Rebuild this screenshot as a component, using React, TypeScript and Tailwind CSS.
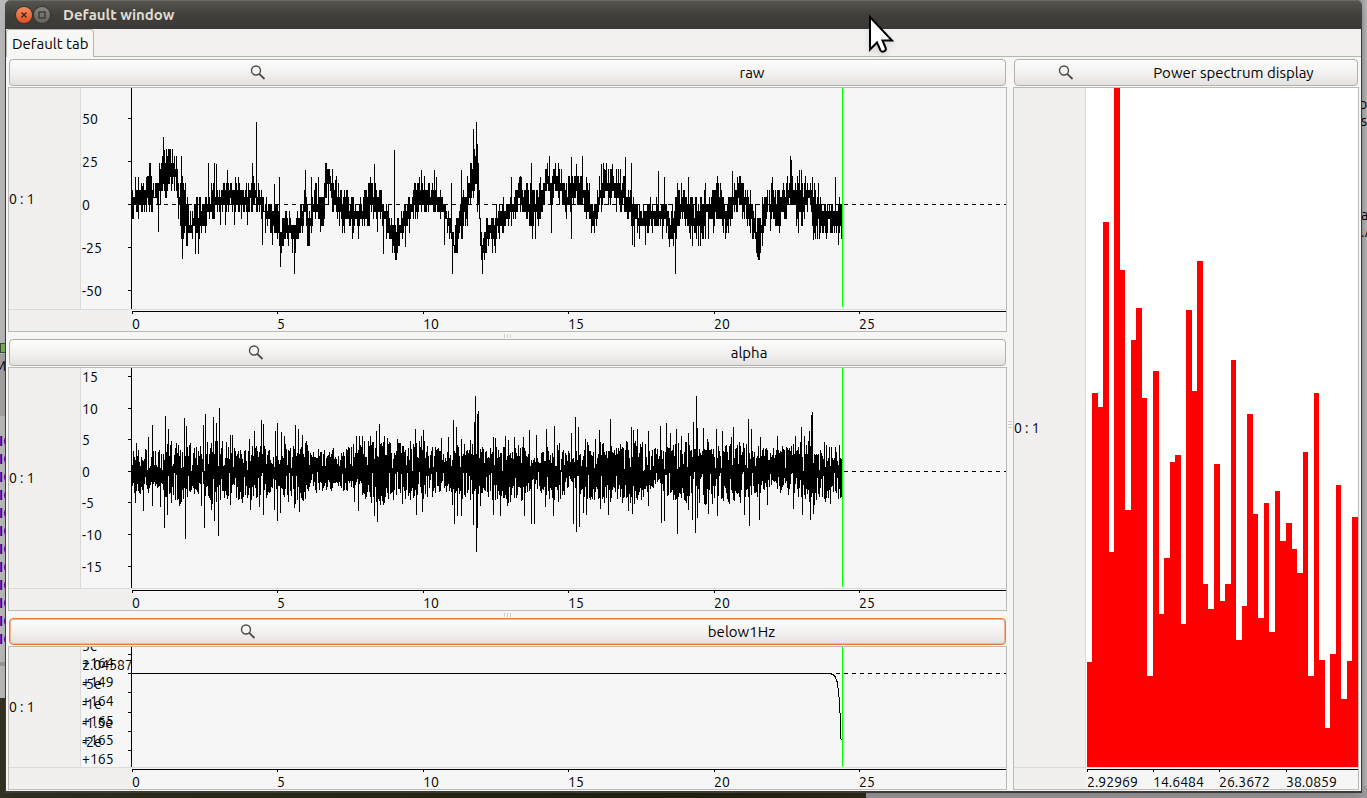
import type { ReactNode } from "react";
import clsx from "clsx";

type Band = [end: number, high: number, low: number];
type Spike = [x: number, value: number];
type Tick = { at: number; lines: string[] };

const CURSOR_X = 710;
const TIME_TICKS = ["0", "5", "10", "15", "20", "25"];

// Signal extents in pixels above (+) and below (-) the zero line.
const rawBands: Band[] = [
  [8, 14, -6], [14, 18, -10], [18, 25, -2], [28, 19, -3], [31, 40, 10], [38, 50, 16], [46, 46, 20],
  [49, 14, -14], [52, 28, -52], [64, -14, -30], [68, 4, -32], [75, 0, -22], [86, 14, -7], [108, 16, -3],
  [118, 14, -9], [126, 24, 4], [140, 0, -19], [148, -3, -26], [151, -20, -52], [158, -14, -30],
  [168, -20, -52], [171, 0, -35], [174, 20, -3], [177, -8, -40], [188, 17, -12], [193, 0, -27],
  [196, 40, 14], [218, 14, -19], [233, 0, -26], [250, 17, -6], [262, -4, -27], [266, -19, -50],
  [276, -9, -30], [288, 14, -9], [292, 19, 0], [308, 14, -1], [319, 0, -14], [325, -29, -56],
  [338, 8, -19], [341, 40, 0], [345, 68, 18], [347, 40, -10], [352, -36, -66], [358, -19, -42],
  [368, -9, -36], [378, 0, -19], [398, 18, -1], [404, 14, -19], [413, 14, -9], [418, 45, 11],
  [421, 25, -20], [425, 40, 18], [441, 18, -6], [451, 26, 8], [458, 24, -9], [466, -3, -27],
  [476, 34, 8], [484, 34, 0], [499, 21, 0], [513, -6, -29], [528, 0, -24], [536, -2, -14],
  [540, -19, -34], [544, 13, -39], [557, 14, -12], [568, 0, -36], [576, 14, -29], [584, 14, -19],
  [590, 19, -14], [599, -2, -27], [611, 24, 1], [623, 14, -19], [628, -14, -52], [643, 11, -9],
  [653, 11, -19], [661, 21, 0], [673, 21, -19], [680, 21, 4], [684, 20, -27], [698, 1, -26], [711, -2, -26],
];

const rawSpikes: Spike[] = [
  [0, -14], [3, 27], [6, 27], [10, 18], [14, 27], [17, 41], [18, 41], [26, -27], [31, 67], [32, 54],
  [36, 54], [37, 46], [42, 48], [44, 48], [49, 48], [50, 27], [50, -54], [63, -49], [66, -49], [76, 41],
  [82, 41], [84, 40], [88, -20], [93, -20], [95, 34], [102, -20], [103, 27], [106, 27], [115, -20],
  [120, 41], [124, 82], [130, -40], [140, -40], [142, 20], [147, 27], [148, -62], [162, -69], [173, 34],
  [175, -40], [179, 27], [186, 27], [188, -27], [193, 41], [194, 41], [203, 24], [220, -34], [238, 27],
  [242, 40], [245, -27], [251, -49], [262, 54], [263, -55], [273, -42], [287, 27], [289, 34], [302, 34],
  [304, 27], [312, -40], [319, 21], [320, -69], [329, 34], [341, 75], [344, 82], [345, 60], [350, -69],
  [363, -48], [379, 27], [387, 27], [389, 27], [399, 41], [400, -34], [403, -34], [408, 27], [417, 48],
  [419, -28], [423, 41], [429, 34], [439, 47], [439, -34], [444, 40], [450, 48], [454, 27], [469, 40],
  [473, 34], [480, 40], [493, 47], [499, 41], [500, -40], [502, -42], [513, -40], [526, 33], [532, 27],
  [530, -34], [537, -42], [543, -69], [556, 27], [560, -41], [568, -41], [573, 21], [576, -34],
  [600, 33], [605, 27], [625, -52], [626, -55], [638, -26], [640, 27], [658, 48], [659, 44], [667, 34],
  [669, 34], [680, 27], [681, -35], [703, 27], [706, -40],
];

const alphaBands: Band[] = [
  [8, 15, -14], [20, 16, -18], [32, 16, -16], [60, 26, -28], [72, 18, -18], [92, 28, -28], [108, 22, -22],
  [124, 18, -22], [136, 26, -26], [145, 8, -9], [172, 26, -28], [202, 16, -14], [222, 15, -12],
  [240, 24, -20], [264, 24, -28], [294, 22, -24], [302, 24, -20], [318, 12, -12], [346, 26, -24],
  [356, 20, -20], [378, 20, -24], [398, 22, -24], [406, 8, -8], [438, 24, -28], [446, 12, -8],
  [468, 24, -26], [504, 22, -24], [520, 26, -26], [530, 16, -12], [562, 22, -24], [595, 24, -26],
  [630, 22, -24], [651, 16, -12], [676, 22, -20], [691, 24, -28], [711, 18, -20],
];

const alphaSpikes: Spike[] = [
  [4, 28], [3, -31], [11, -39], [16, 34], [20, 46], [20, -34], [28, -35], [33, 55], [32, -56], [36, 42],
  [35, -43], [39, 30], [48, -32], [52, 53], [53, -67], [54, 45], [69, -34], [71, 46], [72, -56], [73, 57],
  [79, -38], [81, 54], [82, -49], [84, 48], [86, -64], [87, 63], [90, 30], [98, 36], [98, -33], [100, 36],
  [110, -31], [117, 32], [118, -38], [122, 40], [127, -35], [129, 51], [131, 47], [131, -43], [142, -38],
  [143, 40], [145, 48], [145, -49], [148, -41], [149, 39], [152, 35], [162, -36], [163, 46], [166, 42],
  [167, -40], [170, 36], [174, 30], [201, 23], [221, 27], [222, -30], [224, 35], [226, -39], [227, 35],
  [230, 35], [238, 35], [239, -31], [242, -44], [244, 40], [245, -50], [247, 47], [252, 35], [255, 33],
  [261, -28], [265, 32], [278, 30], [283, 42], [284, -43], [289, 35], [290, -40], [291, 41], [309, 33],
  [316, 34], [320, -33], [321, 51], [322, -52], [324, 44], [325, -44], [329, 32], [329, -44], [340, 27],
  [341, -53], [342, 49], [343, 75], [344, -80], [345, 57], [345, -56], [346, 60], [348, -34], [361, 34],
  [361, -43], [363, 33], [368, -44], [373, 35], [375, -34], [376, 31], [382, 34], [391, 34], [392, -44],
  [397, 41], [399, -52], [402, -52], [404, 36], [413, -35], [414, 42], [421, -44], [422, 45], [439, 38],
  [441, -52], [443, 54], [444, -60], [446, 44], [447, -55], [451, -41], [453, 32], [454, -43], [463, 32],
  [467, 41], [468, -37], [476, -43], [478, 52], [494, 30], [496, -39], [499, 44], [500, -42], [501, 41],
  [505, 42], [516, 40], [516, -34], [528, 45], [529, -51], [532, -49], [534, 48], [538, 38], [544, 42],
  [545, -62], [549, 35], [556, 38], [556, -38], [560, -48], [561, 49], [563, -61], [564, 75], [565, 43],
  [565, -46], [571, 43], [575, 32], [576, -42], [584, 42], [585, -44], [590, 40], [599, 34], [601, 44],
  [612, -43], [616, 52], [617, -54], [619, 42], [627, -48], [628, 34], [635, -33], [645, 35], [661, -37],
  [663, 35], [669, 44], [670, -43], [672, 35], [677, 40], [678, -48], [679, 56], [680, 59], [681, -42],
  [692, 29], [698, -32], [703, 24], [707, 26], [706, -27],
];

const SPECTRUM_HEIGHT = 679;
const spectrum = [
  105, 374, 360, 545, 215, 679, 497, 257, 427, 459, 369, 91, 396, 153, 209, 305, 312, 143, 457, 376, 506,
  183, 158, 303, 166, 183, 407, 127, 161, 353, 253, 149, 264, 135, 276, 226, 244, 218, 194, 315, 91, 374,
  107, 39, 113, 282, 68, 106, 250,
];

function bandAt(bands: Band[], x: number) {
  const centre = (i: number) => ((i > 0 ? bands[i - 1][0] : 0) + bands[i][0]) / 2;
  let i = 0;
  while (i < bands.length - 1 && centre(i + 1) <= x) i++;
  const next = Math.min(i + 1, bands.length - 1);
  const span = centre(next) - centre(i);
  const t = span > 0 ? Math.max(0, (x - centre(i)) / span) : 0;
  return {
    high: bands[i][1] + (bands[next][1] - bands[i][1]) * t,
    low: bands[i][2] + (bands[next][2] - bands[i][2]) * t,
  };
}

type TraceOptions = { zero: number; overshoot: number; spread: number; step: number; gaps: number };

function buildTrace(bands: Band[], spikes: Spike[], { zero, overshoot, spread, step, gaps }: TraceOptions) {
  let seed = 7919;
  const random = () => {
    seed = (seed * 1664525 + 1013904223) % 4294967296;
    return seed / 4294967296;
  };
  const snap = (value: number) => Math.round(Math.round(value / step) * step);
  let d = "";
  for (let x = 0; x < CURSOR_X; x++) {
    const band = bandAt(bands, x);
    const high = band.high + overshoot;
    const low = band.low - overshoot;
    const range = high - low;
    let top = snap(high - random() * spread * range);
    let bottom = snap(low + random() * spread * range);
    // Some columns hold only half a swing.
    const swing = random();
    if (swing < gaps) top = Math.min(top, Math.round(random() * 8));
    else if (swing < gaps * 2) bottom = Math.max(bottom, -Math.round(random() * 8));
    for (const [sx, value] of spikes) {
      if (sx !== x) continue;
      if (value > top) top = value;
      if (value < bottom) bottom = value;
    }
    d += `M${x + 0.5} ${zero - top}V${zero - bottom + 1}`;
  }
  return d;
}

const rawTrace = buildTrace(rawBands, rawSpikes, { zero: 116, overshoot: 8, spread: 0.46, step: 6.9, gaps: 0 });
const alphaTrace = buildTrace(alphaBands, alphaSpikes, { zero: 103, overshoot: 7, spread: 0.3, step: 1, gaps: 0.15 });
const slowTrace = "M0 26.5H698L701 27.5L703 29.5L705 34.5L706 41L707 50L708 66L709 92H710";

const single = (at: number, label: string): Tick => ({ at, lines: [label] });

const channels = [
  {
    name: "raw",
    zero: 116,
    trace: rawTrace,
    size: "grow-[243]",
    ticks: [single(30, "50"), single(73, "25"), single(116, "0"), single(159, "-25"), single(202, "-50")],
  },
  {
    name: "alpha",
    zero: 103,
    trace: alphaTrace,
    size: "grow-[242]",
    ticks: [
      single(8, "15"), single(40, "10"), single(71, "5"), single(103, "0"),
      single(134, "-5"), single(166, "-10"), single(198, "-15"),
    ],
  },
  {
    name: "below1Hz",
    zero: 26,
    trace: slowTrace,
    size: "grow-[142]",
    focused: true,
    ticks: [
      { at: 7, lines: ["5e", "+164"] },
      { at: 26, lines: ["2.04587", "+149"] },
      { at: 45, lines: ["-5e", "+164"] },
      { at: 65, lines: ["-1e", "+165"] },
      { at: 84, lines: ["-1.5e", "+165"] },
      { at: 103, lines: ["-2e", "+165"] },
    ],
  },
];

function SearchIcon() {
  return (
    <svg className="size-4 shrink-0" viewBox="0 0 16 16" fill="none" aria-hidden="true">
      <circle cx="6" cy="5.500" r="4.500" stroke="#4a4a48" strokeWidth="1.4" />
      <path d="M9.200 8.800L14.500 14" stroke="#4a4a48" strokeWidth="1.8" />
    </svg>
  );
}

function PanelButton({ children, focused }: { children: ReactNode; focused?: boolean }) {
  return (
    <button
      type="button"
      className={clsx(
        "mx-px mb-px flex h-[27px] shrink-0 items-center justify-around rounded border bg-linear-to-b from-[#fdfdfd] via-[#f3f2f1] to-[#e4e2e0] px-1 text-[15px]",
        focused ? "border-[#f07a35] ring-1 ring-inset ring-[#f6b58e]" : "border-[#b3afa9]",
      )}
    >
      <SearchIcon />
      <span>{children}</span>
    </button>
  );
}

function YAxis({ ticks }: { ticks: Tick[] }) {
  return (
    <svg className="size-full overflow-hidden" shapeRendering="crispEdges">
      {ticks.map((tick) => (
        <g key={tick.at}>
          <path d={`M47 ${tick.at + 0.5}h3`} stroke="#000" />
          {tick.lines.map((line, i) => (
            <text key={line} x="1" y={tick.at + 6 + (tick.lines.length > 1 ? i * 17 - 9 : 0)}>
              {line}
            </text>
          ))}
        </g>
      ))}
    </svg>
  );
}

function XAxis({ labels, start, step }: { labels: string[]; start: number; step: number }) {
  return (
    <svg className="size-full overflow-hidden">
      <path d={`M${start} 1.5H2000`} stroke="#000" shapeRendering="crispEdges" />
      {labels.map((label, i) => {
        const x = start + Math.floor(i * step);
        return (
          <g key={label}>
            <path d={`M${x + 0.5} 1v3`} stroke="#000" shapeRendering="crispEdges" />
            <text x={x} y="19">{label}</text>
          </g>
        );
      })}
    </svg>
  );
}

function ChannelLabel() {
  return (
    <div className="flex items-center border-r border-[#dcdad8] bg-[#f1f0ee] whitespace-nowrap">0 : 1</div>
  );
}

function ChannelPanel({ channel }: { channel: (typeof channels)[number] }) {
  return (
    <>
      <PanelButton focused={channel.focused}>{channel.name}</PanelButton>
      <section
        aria-label={channel.name}
        className={clsx(
          "grid min-h-0 basis-0 grid-cols-[72px_51px_minmax(0,1fr)] grid-rows-[minmax(0,1fr)_22px] border border-[#bdbab6] bg-[#f6f6f6]",
          channel.size,
        )}
      >
        <ChannelLabel />
        <div className="min-h-0 border-r border-black">
          <YAxis ticks={channel.ticks} />
        </div>
        <svg className="size-full overflow-hidden" fill="none" shapeRendering="crispEdges">
          <line
            x1="0" x2="100%" y1={channel.zero + 0.5} y2={channel.zero + 0.5}
            stroke="#000" strokeDasharray="4 4"
          />
          <path d={channel.trace} stroke="#000" />
          <path d={`M${CURSOR_X + 0.5} 0V219`} stroke="#00ff00" />
        </svg>
        <div className="col-span-2 border-t border-[#dcdad8] bg-[#f1f0ee]" />
        <div className="border-t border-[#dcdad8]">
          <XAxis labels={TIME_TICKS} start={0} step={145.5} />
        </div>
      </section>
    </>
  );
}

function Grip({ vertical }: { vertical?: boolean }) {
  return (
    <div className={clsx("flex shrink-0 items-center justify-center gap-0.5", vertical ? "w-1.5 flex-col" : "h-[7px]")}>
      {[0, 1, 2].map((i) => (
        <span key={i} className={clsx("bg-[#cfccc9]", vertical ? "h-px w-1" : "h-1 w-px")} />
      ))}
    </div>
  );
}

function SpectrumPanel() {
  const count = spectrum.length;
  return (
    <div className="flex min-w-0 grow-[346] basis-0 flex-col">
      <PanelButton>Power spectrum display</PanelButton>
      <section
        aria-label="Power spectrum display"
        className="grid min-h-0 grow grid-cols-[72px_minmax(0,1fr)] grid-rows-[minmax(0,1fr)_22px] border border-[#bdbab6] bg-[#f6f6f6]"
      >
        <ChannelLabel />
        <div className="min-h-0 bg-white pl-px">
          <svg
            className="size-full"
            viewBox={`0.08 0 ${count - 0.08} ${SPECTRUM_HEIGHT}`}
            preserveAspectRatio="none"
            fill="#ff0000"
            shapeRendering="crispEdges"
          >
            {spectrum.map((value, i) => (
              <rect key={i} x={i} y={SPECTRUM_HEIGHT - value} width="1" height={value} />
            ))}
          </svg>
        </div>
        <div className="border-t border-[#dcdad8] bg-[#f1f0ee]" />
        <div className="border-t border-[#dcdad8]">
          <XAxis labels={["2.92969", "14.6484", "26.3672", "38.0859"]} start={1} step={66.4} />
        </div>
      </section>
    </div>
  );
}

function TitleBar() {
  return (
    <header className="flex h-[29px] shrink-0 items-center gap-0.5 rounded-t-md border-t border-[#6b6a64] bg-linear-to-b from-[#55544e] via-[#403f3a] to-[#3b3a36] pl-[11px]">
      <button
        type="button"
        aria-label="Close"
        className="size-4 rounded-full bg-linear-to-b from-[#f58d62] to-[#e0501a] ring-1 ring-[#34332f]"
      >
        <svg viewBox="0 0 16 16" stroke="#45200f" strokeWidth="1.3">
          <path d="M5.5 5.5l5 5M10.5 5.5l-5 5" />
        </svg>
      </button>
      <button
        type="button"
        aria-label="Maximize"
        className="size-4 rounded-full bg-linear-to-b from-[#85847d] to-[#64635c] ring-1 ring-[#34332f]"
      >
        <svg viewBox="0 0 16 16" fill="none" stroke="#33322e" strokeWidth="1.2">
          <rect x="5" y="5" width="6" height="6" />
        </svg>
      </button>
      <h1 className="ml-[11px] text-[15px] font-bold text-[#dfdbd2]">Default window</h1>
    </header>
  );
}

// Windows and wallpaper that peek out around the edges.
function Desktop() {
  return (
    <div className="absolute inset-0 overflow-hidden bg-linear-to-r from-[#343322] via-[#24220f] to-[#4b4338]" aria-hidden="true">
      <div className="absolute top-0 left-0 h-[698px] w-3 bg-[#b9b9b9]">
        <div className="absolute top-[343px] h-2.5 w-3 border border-[#35512a] bg-[#79ad5c]" />
        <div className="absolute top-[354px] h-[62px] w-3 bg-[#a2a1a0]" />
        <span className="absolute top-[357px] -left-1.5 leading-[18px]">M</span>
        <div className="absolute top-[432px] -left-px text-[#4b00a8]">
          {Array.from({ length: 12 }, (_, i) => (
            <div key={i} className="h-[18px] font-bold leading-[18px]">IC</div>
          ))}
        </div>
        <div className="absolute top-[662px] h-1 w-3 bg-[#999]" />
      </div>
      <div className="absolute top-0 right-0 h-full w-3 bg-linear-to-r from-[#777] to-[#b5b5b5]">
        <span className="absolute top-[94px] left-1">p</span>
        <span className="absolute top-[111px] left-1.5">s</span>
        <span className="absolute top-[205px] left-1.5">a</span>
        <span className="absolute top-[222px] left-1.5">.A</span>
      </div>
      <div className="absolute right-0 bottom-0 left-[866px] h-3 bg-[#9b999c]" />
    </div>
  );
}

function Pointer() {
  return (
    <svg className="pointer-events-none absolute top-3.5 left-[867px] h-10 w-7 drop-shadow-md" viewBox="0 0 28 40" aria-hidden="true">
      <path
        d="M3 3V35.5L10 28.5L13.500 36.5Q15 38.500 17.500 37.200Q19.500 36 18.700 34L15.500 26.500H25Z"
        fill="#fff"
        stroke="#000"
        strokeWidth="2"
      />
    </svg>
  );
}

export default function App() {
  return (
    <div className="relative flex h-screen flex-col overflow-hidden px-[5px] pb-[5px] font-['Ubuntu','Noto_Sans',sans-serif] text-sm text-black">
      <Desktop />
      <main className="relative flex min-h-0 grow flex-col rounded-t-md bg-[#3c3b37] shadow-lg">
        <TitleBar />
        <div className="mx-px mb-0.5 flex min-h-0 grow flex-col bg-[#f6f6f5]">
          <nav className="flex h-7 shrink-0 items-stretch border-b border-[#b8b5b1] bg-[#f2f1f0]">
            <button type="button" className="-mb-px rounded-t border border-b-0 border-[#b8b5b1] bg-[#f7f7f6] px-[5px] text-[15px]">
              Default tab
            </button>
          </nav>
          <div className="flex min-h-0 grow px-0.5 pt-0.5 pb-px">
            <div className="flex min-w-0 grow-[999] basis-0 flex-col">
              <ChannelPanel channel={channels[0]} />
              <Grip />
              <ChannelPanel channel={channels[1]} />
              <Grip />
              <ChannelPanel channel={channels[2]} />
            </div>
            <Grip vertical />
            <SpectrumPanel />
          </div>
        </div>
      </main>
      <Pointer />
    </div>
  );
}
